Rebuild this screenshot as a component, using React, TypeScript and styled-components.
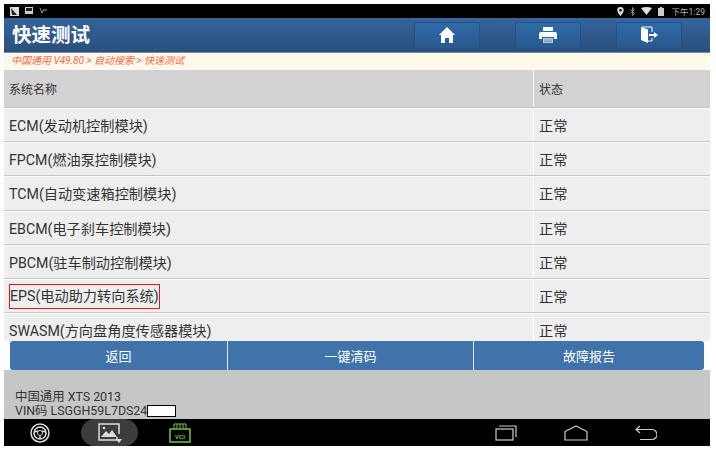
import React from "react";
import styled, { createGlobalStyle } from "styled-components";

const GlobalStyle = createGlobalStyle`
  html, body {
    margin: 0;
    padding: 0;
    background: #fff;
    font-family: Roboto, "Noto Sans CJK SC", sans-serif;
  }
`;

const Screen = styled.div`
  width: 716px;
  height: 450px;
  box-sizing: border-box;
  padding: 4px 6px 4px 4px;
  display: flex;
  flex-direction: column;
  overflow: hidden;
`;

const StatusBar = styled.div`
  height: 14px;
  flex: none;
  background: #000;
  display: flex;
  align-items: center;
  padding: 0 5px 0 6px;
  gap: 6px;
`;

const StatusSpacer = styled.div`
  flex: 1;
`;

const Clock = styled.span`
  color: #aeb4b4;
  font-size: 8.5px;
  margin-left: 2px;
`;

const Header = styled.div`
  height: 35px;
  flex: none;
  box-sizing: border-box;
  background: linear-gradient(#34659c, #2b4f7c);
  border-bottom: 1px solid #6f8cae;
  display: flex;
  align-items: center;
  padding: 0 28px 0 8px;
`;

const Title = styled.div`
  flex: 1;
  color: #fff;
  font-size: 19.5px;
  font-weight: bold;
  line-height: 30px;
  padding-top: 2px;
`;

const HeaderActions = styled.div`
  display: flex;
  gap: 35px;
`;

const HeaderButton = styled.div`
  width: 66px;
  height: 27px;
  box-sizing: border-box;
  background: linear-gradient(#2f6aa8, #28598f);
  border: 1px solid #26527f;
  border-radius: 2px;
  display: flex;
  align-items: center;
  justify-content: center;
`;

const Breadcrumb = styled.div`
  height: 16px;
  flex: none;
  background: #fff9ea;
  color: #fb6a4e;
  font-size: 10px;
  font-style: italic;
  line-height: 16px;
  padding-left: 7px;
`;

const TableArea = styled.div`
  height: 272px;
  flex: none;
  overflow: hidden;
`;

const Row = styled.div<{ $head?: boolean }>`
  height: ${({ $head }) => ($head ? "39px" : "34.2px")};
  box-sizing: border-box;
  display: grid;
  grid-template-columns: 529px 1fr;
  background: ${({ $head }) => ($head ? "#d2d2d2" : "#eeeeee")};
  border-top: 1px solid #fafafa;
  border-bottom: 1px solid #c6c6c6;
`;

const Cell = styled.div<{ $head?: boolean }>`
  display: flex;
  align-items: center;
  padding-left: 5px;
  color: #333;
  font-size: ${({ $head }) => ($head ? "12px" : "14.2px")};
  & + & {
    border-left: 1px solid #fafafa;
    padding-left: 5px;
  }
`;

const Highlighted = styled.span`
  border: 1px solid #e8141c;
  padding: 3px 0;
  line-height: 17px;
`;

const ActionBar = styled.div`
  height: 29px;
  flex: none;
  margin: 0 6px;
  display: grid;
  grid-template-columns: 217px 245px 1fr;
  gap: 1px;
  background: #dbe5ef;
  border-radius: 3px;
  overflow: hidden;
`;

const ActionButton = styled.div`
  background: #4173ab;
  color: #fff;
  font-size: 13px;
  display: flex;
  align-items: center;
  justify-content: center;
`;

const VehicleInfo = styled.div`
  height: 49px;
  flex: none;
  background: #c6c6c6;
  color: #333;
  box-sizing: border-box;
  padding: 20px 0 0 11px;
`;

const InfoLine = styled.div`
  display: flex;
  align-items: center;
  height: 14px;
  font-size: 12.4px;
  line-height: 14px;
`;

const MaskedVin = styled.span`
  display: inline-block;
  width: 29px;
  height: 12px;
  background: #fff;
  border: 1px solid #000;
  box-sizing: border-box;
`;

const NavBar = styled.div`
  height: 27px;
  flex: none;
  background: #000;
  display: flex;
  align-items: center;
  padding-left: 26px;
`;

const GalleryPill = styled.div`
  width: 57px;
  height: 27px;
  margin-left: 31px;
  margin-right: 31px;
  border-radius: 14px;
  background: #3c3c3c;
  display: flex;
  align-items: center;
  justify-content: center;
`;

const NavSystem = styled.div`
  margin-left: auto;
  margin-right: 53px;
  display: flex;
  align-items: center;
  gap: 47px;
`;

const SYSTEMS = [
  "ECM(发动机控制模块)",
  "FPCM(燃油泵控制模块)",
  "TCM(自动变速箱控制模块)",
  "EBCM(电子刹车控制模块)",
  "PBCM(驻车制动控制模块)",
  "EPS(电动助力转向系统)",
  "SWASM(方向盘角度传感器模块)",
];

const App = () => (
  <Screen>
    <GlobalStyle />
    <StatusBar>
      <svg width="9" height="9" viewBox="0 0 9 9">
        <rect width="9" height="9" fill="#ddd" />
        <path d="M1 1l6 7H2z" fill="#222" />
      </svg>
      <svg width="8" height="8" viewBox="0 0 8 8">
        <rect width="8" height="7" fill="#ccc" />
        <rect x="1" y="1" width="6" height="3" fill="#222" />
      </svg>
      <svg width="9" height="8" viewBox="0 0 9 8" fill="none" stroke="#999">
        <path d="M1 1l2 5 2-4M5 3h3" />
      </svg>
      <StatusSpacer />
      <svg width="7" height="9" viewBox="0 0 7 9">
        <path d="M3.5 0a3.2 3.2 0 0 1 3.2 3.2C6.700 5.500 3.500 9 3.500 9S.3 5.500.3 3.200A3.200 3.200 0 0 1 3.500 0z" fill="#ddd" />
        <circle cx="3.500" cy="3.200" r="1.200" fill="#000" />
      </svg>
      <svg width="5" height="9" viewBox="0 0 5 9" fill="none" stroke="#aaa" strokeWidth="0.8">
        <path d="M.5 2.500l4 4L2.500 8.500V.5l2 2-4 4" />
      </svg>
      <svg width="11" height="8" viewBox="0 0 11 8">
        <path d="M0 1q5.500-2 11 0L5.500 8z" fill="#ddd" />
      </svg>
      <svg width="6" height="9" viewBox="0 0 6 9">
        <rect x="0" y="1" width="6" height="8" fill="#ccc" />
        <rect x="2" y="0" width="2" height="1" fill="#ccc" />
      </svg>
      <Clock>下午1:29</Clock>
    </StatusBar>
    <Header>
      <Title>快速测试</Title>
      <HeaderActions>
        <HeaderButton>
          <svg width="16" height="16" viewBox="0 0 16 16">
            <path d="M8 0l8 8h-2v8h-4v-5H6v5H2V8H0z" fill="#fff" />
          </svg>
        </HeaderButton>
        <HeaderButton>
          <svg width="18" height="18" viewBox="0 0 18 18">
            <path d="M4 1h10v4H4z" fill="#fff" />
            <path d="M2 6h14a2 2 0 0 1 2 2v5h-3v-2H3v2H0V8a2 2 0 0 1 2-2z" fill="#fff" />
            <path d="M4 12h10v5H4z" fill="#b9c8d8" />
            <path d="M5 14h8M5 15.500h8" stroke="#6d8cad" strokeWidth="0.700" />
          </svg>
        </HeaderButton>
        <HeaderButton>
          <svg width="18" height="18" viewBox="0 0 18 18">
            <path d="M1 1l7 2.500V17l-7-3z" fill="#fff" />
            <path d="M2 1h10v5M12 12v3H8" fill="none" stroke="#fff" />
            <path d="M9 8h5V6l4 3-4 3v-2H9z" fill="#fff" />
          </svg>
        </HeaderButton>
      </HeaderActions>
    </Header>
    <Breadcrumb>中国通用 V49.80 &gt; 自动搜索 &gt; 快速测试</Breadcrumb>
    <TableArea>
      <Row $head>
        <Cell $head>系统名称</Cell>
        <Cell $head>状态</Cell>
      </Row>
      {SYSTEMS.map((name) => (
        <Row key={name}>
          <Cell>{name.startsWith("EPS") ? <Highlighted>{name}</Highlighted> : name}</Cell>
          <Cell>正常</Cell>
        </Row>
      ))}
    </TableArea>
    <ActionBar>
      <ActionButton>返回</ActionButton>
      <ActionButton>一键清码</ActionButton>
      <ActionButton>故障报告</ActionButton>
    </ActionBar>
    <VehicleInfo>
      <InfoLine>中国通用 XTS 2013</InfoLine>
      <InfoLine>
        VIN码 LSGGH59L7DS24
        <MaskedVin />
      </InfoLine>
    </VehicleInfo>
    <NavBar>
      <svg width="20" height="20" viewBox="0 0 20 20" fill="none" stroke="#ddd">
        <circle cx="10" cy="10" r="9" strokeWidth="1.500" />
        <circle cx="10" cy="10" r="6" strokeWidth="1.500" />
        <circle cx="10" cy="10" r="2.500" />
        <path d="M4 9l4-1M16 9l-4-1M10 16v-3" strokeWidth="1.500" />
      </svg>
      <GalleryPill>
        <svg width="26" height="22" viewBox="0 0 26 22" fill="none" stroke="#ddd" strokeWidth="1.500">
          <path d="M20 15v3H2V2h20v10" />
          <path d="M4 15l5-6 3 3 3-4 5 7z" fill="#ddd" stroke="none" />
          <circle cx="7" cy="6" r="1.300" fill="#ddd" stroke="none" />
          <path d="M19 17h6l-3 4z" fill="#ddd" stroke="none" />
        </svg>
      </GalleryPill>
      <svg width="22" height="20" viewBox="0 0 22 20" fill="none" stroke="#7cc23e">
        <rect x="1" y="6" width="20" height="13" strokeWidth="1.500" />
        <path d="M5 6V1h12v5M8 1v4M11 1v4M14 1v4" />
        <text x="11" y="16" fontSize="6" fontWeight="bold" fill="#7cc23e" stroke="none" textAnchor="middle" fontFamily="Liberation Sans">VCI</text>
      </svg>
      <NavSystem>
        <svg width="22" height="16" viewBox="0 0 22 16" fill="none" stroke="#ccc" strokeWidth="1.200">
          <rect x="1" y="4" width="17" height="11" />
          <path d="M4 1h17v11" />
        </svg>
        <svg width="24" height="16" viewBox="0 0 24 16" fill="none" stroke="#ccc" strokeWidth="1.200">
          <path d="M1 6.500L12 1l11 5.500V15H1z" />
        </svg>
        <svg width="22" height="16" viewBox="0 0 22 16" fill="none" stroke="#ccc" strokeWidth="1.200">
          <path d="M5 1L1 4.500 5 8M1 4.500h16a4 4 0 0 1 0 10H5" />
        </svg>
      </NavSystem>
    </NavBar>
  </Screen>
);

export default App;
